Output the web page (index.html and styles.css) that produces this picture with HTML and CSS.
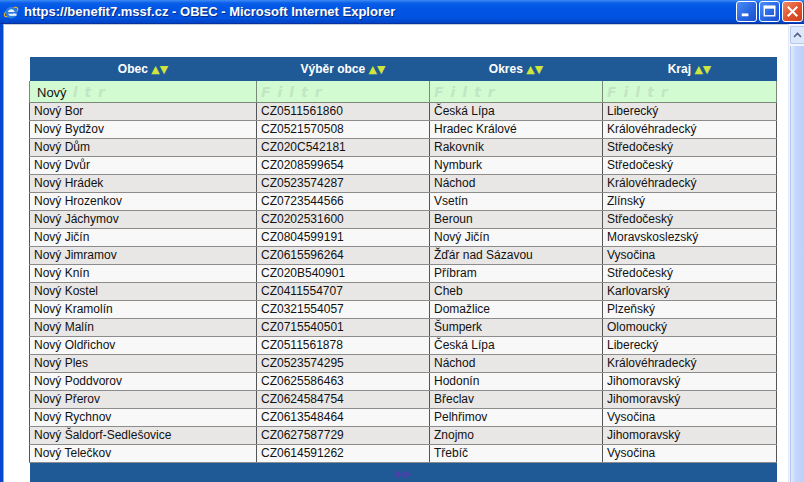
FILE: index.html
```html
<!DOCTYPE html>
<html>
<head>
    <title>OBEC</title>
    <meta charset="UTF-8">
    <link rel="stylesheet" href="styles.css">
</head>
<body>
    <div class="window">
        <div class="titlebar">
            <svg class="title-icon" width="16" height="16" viewBox="0 0 16 16">
                <ellipse cx="8" cy="8" rx="7.5" ry="3.2" transform="rotate(-30 8 8)" fill="none" stroke="#f2b418" stroke-width="1.3"/>
                <circle cx="8.3" cy="8.6" r="4.6" fill="#e8f2ff" stroke="#2f7de0" stroke-width="2.4"/>
                <rect x="4.2" y="8" width="8.4" height="1.8" fill="#2f7de0"/>
                <rect x="10" y="9.6" width="3.5" height="2.2" fill="#e8f2ff"/>
            </svg>
            <span class="title-text">https://benefit7.mssf.cz - OBEC - Microsoft Internet Explorer</span>
            <div class="caption-buttons">
                <div class="cap-btn">
                    <svg width="20" height="20" viewBox="0 0 20 20"><rect x="5" y="12" width="7" height="3" fill="#fff"/></svg>
                </div>
                <div class="cap-btn">
                    <svg width="20" height="20" viewBox="0 0 20 20"><rect x="4.5" y="4.5" width="11" height="10" fill="none" stroke="#fff" stroke-width="1.5"/><rect x="4" y="4" width="12" height="3" fill="#fff"/></svg>
                </div>
                <div class="cap-btn close">
                    <svg width="20" height="20" viewBox="0 0 20 20"><path d="M5 5 L15 15 M15 5 L5 15" stroke="#fff" stroke-width="2.2"/></svg>
                </div>
            </div>
        </div>

        <div class="client">
            <div class="page">
                <table class="grid">
                    <colgroup>
                        <col style="width: 227px">
                        <col style="width: 173px">
                        <col style="width: 173px">
                        <col style="width: 174px">
                    </colgroup>
                    <thead>
                        <tr class="head">
                            <th>Obec <span class="sort">▲▼</span></th>
                            <th>Výběr obce <span class="sort">▲▼</span></th>
                            <th>Okres <span class="sort">▲▼</span></th>
                            <th>Kraj <span class="sort">▲▼</span></th>
                        </tr>
                        <tr class="filter">
                            <td><div class="filter-box"><span class="filter-value">Nový</span><span class="ghost ghost-tail">ltr</span></div></td>
                            <td><div class="filter-box"><span class="ghost">Filtr</span></div></td>
                            <td><div class="filter-box"><span class="ghost">Filtr</span></div></td>
                            <td><div class="filter-box"><span class="ghost">Filtr</span></div></td>
                        </tr>
                    </thead>
                    <tbody id="rows"></tbody>
                    <tfoot>
                        <tr class="foot">
                            <td colspan="4">
                                <svg class="next" width="17" height="9" viewBox="0 0 17 9"><path d="M0 0 L8 4.5 L0 9 Z M8 0 L16 4.5 L8 9 Z" fill="#4a40aa"/></svg>
                            </td>
                        </tr>
                    </tfoot>
                </table>
            </div>
            <div class="scrollbar">
                <div class="scroll-up">
                    <svg width="9" height="6" viewBox="0 0 9 6"><path d="M1 5 L4.5 1.5 L8 5" fill="none" stroke="#4d6185" stroke-width="1.6"/></svg>
                </div>
                <div class="scroll-thumb"></div>
            </div>
        </div>
    </div>

    <script>
        const obce = [
            ['Nový Bor', 'CZ0511561860', 'Česká Lípa', 'Liberecký'],
            ['Nový Bydžov', 'CZ0521570508', 'Hradec Králové', 'Královéhradecký'],
            ['Nový Dům', 'CZ020C542181', 'Rakovník', 'Středočeský'],
            ['Nový Dvůr', 'CZ0208599654', 'Nymburk', 'Středočeský'],
            ['Nový Hrádek', 'CZ0523574287', 'Náchod', 'Královéhradecký'],
            ['Nový Hrozenkov', 'CZ0723544566', 'Vsetín', 'Zlínský'],
            ['Nový Jáchymov', 'CZ0202531600', 'Beroun', 'Středočeský'],
            ['Nový Jičín', 'CZ0804599191', 'Nový Jičín', 'Moravskoslezský'],
            ['Nový Jimramov', 'CZ0615596264', 'Žďár nad Sázavou', 'Vysočina'],
            ['Nový Knín', 'CZ020B540901', 'Příbram', 'Středočeský'],
            ['Nový Kostel', 'CZ0411554707', 'Cheb', 'Karlovarský'],
            ['Nový Kramolín', 'CZ0321554057', 'Domažlice', 'Plzeňský'],
            ['Nový Malín', 'CZ0715540501', 'Šumperk', 'Olomoucký'],
            ['Nový Oldřichov', 'CZ0511561878', 'Česká Lípa', 'Liberecký'],
            ['Nový Ples', 'CZ0523574295', 'Náchod', 'Královéhradecký'],
            ['Nový Poddvorov', 'CZ0625586463', 'Hodonín', 'Jihomoravský'],
            ['Nový Přerov', 'CZ0624584754', 'Břeclav', 'Jihomoravský'],
            ['Nový Rychnov', 'CZ0613548464', 'Pelhřimov', 'Vysočina'],
            ['Nový Šaldorf-Sedlešovice', 'CZ0627587729', 'Znojmo', 'Jihomoravský'],
            ['Nový Telečkov', 'CZ0614591262', 'Třebíč', 'Vysočina']
        ];

        const tbody = document.getElementById('rows');
        obce.forEach((obec, i) => {
            const tr = document.createElement('tr');
            tr.className = i % 2 === 0 ? 'odd' : 'even';
            obec.forEach(text => {
                const td = document.createElement('td');
                td.textContent = text;
                tr.appendChild(td);
            });
            tbody.appendChild(tr);
        });
    </script>
</body>
</html>
```

FILE: styles.css
```css
body {
    margin: 0;
    padding: 0;
    background: #ffffff;
    font-family: 'Liberation Sans', Arial, sans-serif;
    overflow: hidden;
}

.window {
    width: 804px;
    height: 482px;
    display: flex;
    flex-direction: column;
}

/* XP title bar */
.titlebar {
    height: 23px;
    display: flex;
    align-items: center;
    padding-left: 3px;
    background: linear-gradient(to bottom, #3d8bf5 0px, #0a5fe8 3px, #0055e5 8px, #0053e0 18px, #0042c4 23px);
    border-bottom: 1px solid #0831a0;
}

.title-icon {
    margin-right: 5px;
    margin-top: 1px;
}

.title-text {
    color: #ffffff;
    font-size: 13px;
    font-weight: bold;
    text-shadow: 1px 1px 0 #0a2a80;
    white-space: nowrap;
    flex: 1;
}

.caption-buttons {
    display: flex;
    gap: 2px;
    align-self: flex-start;
    margin-top: 1px;
    margin-right: 1px;
}

.cap-btn {
    width: 19px;
    height: 19px;
    border: 1px solid #ffffff;
    border-radius: 3px;
    background: linear-gradient(135deg, #4c8df7, #2663e0 60%, #1b4fd0);
    display: flex;
    align-items: center;
    justify-content: center;
}

.cap-btn svg {
    width: 19px;
    height: 19px;
}

.cap-btn.close {
    background: linear-gradient(135deg, #f08a68, #e0512a 55%, #c8401c);
}

/* client area */
.client {
    flex: 1;
    display: flex;
    border-left: 3px solid #0848d0;
    min-height: 0;
}

.page {
    flex: 1;
    border-left: 1px solid #9aa8c4;
    border-top: 1px solid #c8cfdc;
    padding: 32px 0 0 25px;
    overflow: hidden;
}

.scrollbar {
    width: 15px;
    display: flex;
    flex-direction: column;
    border-left: 1px solid #e4e8f0;
    background: #f2f5fc;
}

.scroll-up {
    height: 16px;
    margin: 2px 0 2px 1px;
    background: #dce7fc;
    border: 1px solid #b6c9f0;
    border-right: none;
    border-radius: 2px 0 0 2px;
    display: flex;
    align-items: center;
    justify-content: center;
}

.scroll-thumb {
    flex: 1;
    margin-left: 1px;
    background: linear-gradient(to right, #e2ebfd, #c3d5fb 40%, #bcd0fa);
    border-left: 1px solid #b0c6f2;
}

/* grid */
.grid {
    width: 747px;
    table-layout: fixed;
    border-collapse: collapse;
    font-size: 12px;
    color: #111111;
}

.grid th {
    background: #1f5a96;
    color: #ffffff;
    font-weight: bold;
    font-size: 12px;
    height: 24px;
    padding: 0;
    text-align: center;
}

.sort {
    color: #cfe43c;
    font-family: 'DejaVu Sans', sans-serif;
    font-size: 11px;
    letter-spacing: 0;
}

.filter td {
    background: #d2fbd2;
    padding: 0 4px;
    border: 1px solid #7a8a7a;
    border-top: none;
}

.filter-box {
    display: flex;
    align-items: center;
    height: 21px;
    white-space: nowrap;
}

.ghost {
    color: #c2e6c2;
    font-family: 'DejaVu Sans', sans-serif;
    font-size: 14px;
    font-weight: bold;
    font-style: italic;
    letter-spacing: 7px;
}

.ghost-tail {
    margin-left: 6px;
}

.filter-value {
    font-size: 13px;
    color: #111111;
    padding: 1px 0 0 3px;
}

.grid tbody td {
    height: 17px;
    padding: 0 4px;
    line-height: 17px;
    border: 1px solid #8c8c8c;
    border-left-color: #555555;
    border-right-color: #555555;
    white-space: nowrap;
    overflow: hidden;
}

.grid tr.odd td {
    background: #e9e7e6;
}

.grid tr.even td {
    background: #f8f8f8;
}

.foot td {
    background: #1f5a96;
    height: 24px;
    padding: 7px 0 0 0;
    text-align: center;
    vertical-align: top;
    line-height: 0;
}

.next {
    display: inline-block;
}
```
